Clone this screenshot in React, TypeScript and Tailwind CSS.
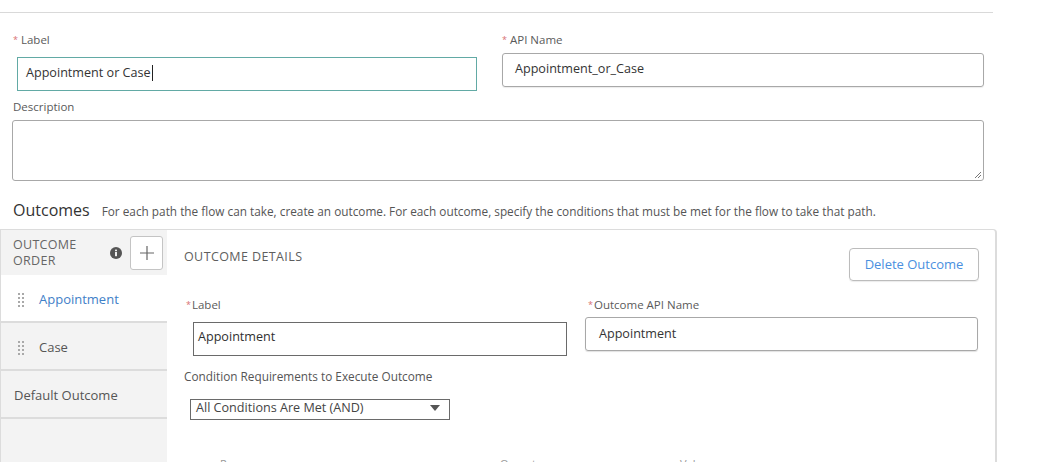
import type { ReactNode } from 'react'

const FONT = { fontFamily: '"Open Sans", "Noto Sans", Arial, sans-serif' }

function Req({ children, gap = true }: { children: ReactNode; gap?: boolean }) {
  return (
    <div className="flex h-[14px] items-center text-[11.5px] leading-[14px] text-[#5a5a5a]">
      <span className={`text-[9px] text-[#d76f72] ${gap ? 'mr-[3px]' : 'mr-[1px]'}`}>*</span>
      {children}
    </div>
  )
}

function DragDots() {
  return (
    <svg width="6" height="14" viewBox="0 0 6 14" className="shrink-0">
      {[0, 1, 2, 3].map((r) =>
        [0, 1].map((c) => (
          <rect key={`${r}-${c}`} x={c * 4} y={r * 4} width="2" height="2" fill="#a9a9a9" />
        )),
      )}
    </svg>
  )
}

function SideRow({
  label,
  active,
  handle,
}: {
  label: string
  active?: boolean
  handle?: boolean
}) {
  return (
    <div
      className={`flex h-[48px] items-center border-b-2 border-[#dcdcdc] pt-[3px] ${
        active ? 'bg-white' : 'bg-[#f3f3f3]'
      } ${handle ? 'pl-[17px]' : 'pl-[13px]'}`}
    >
      {handle && <DragDots />}
      <span
        className={`text-[13px] ${handle ? 'ml-[15px]' : ''} ${
          active ? 'text-[#3f80c8]' : 'text-[#555]'
        }`}
      >
        {label}
      </span>
    </div>
  )
}

export default function App() {
  return (
    <div className="relative h-[462px] w-[1055px] overflow-hidden bg-white" style={FONT}>
      {/* header rule */}
      <div className="h-[13px] w-[993px] border-b border-[#d9d9d9]" />

      {/* label / api name */}
      <div className="flex h-[78px] items-start">
        <div className="ml-[13px] mt-[20px] w-[464px]">
          <Req>Label</Req>
          <div className="ml-[4px] mt-[10px] flex h-[34px] w-[460px] items-center border border-[#62aaa5] pb-[2px] pl-[8px] text-[12.6px] text-[#333]">
            Appointment or Case
            <span className="ml-[1px] inline-block h-[16px] w-px bg-[#222]" />
          </div>
        </div>
        <div className="ml-[25px] mt-[20px] w-[482px]">
          <Req>API Name</Req>
          <div className="mt-[6px] flex h-[34px] w-[482px] items-center rounded-[3px] border border-[#a8a8a8] pb-[2px] pl-[12px] text-[12.6px] text-[#333] shadow-[0_1px_1px_rgba(0,0,0,0.08)]">
            Appointment_or_Case
          </div>
        </div>
      </div>

      {/* description */}
      <div className="ml-[13px] mt-[9px] h-[14px] text-[11.5px] leading-[14px] text-[#5a5a5a]">
        Description
      </div>
      <div className="relative ml-[12px] mt-[6px] h-[61px] w-[972px] rounded-[3px] border border-[#a8a8a8]">
        <svg width="9" height="9" viewBox="0 0 9 9" className="absolute bottom-[1px] right-[1px]">
          <path d="M8 2 L2 8 M8 5 L5 8" stroke="#777" strokeWidth="1" />
        </svg>
      </div>

      {/* outcomes heading */}
      <div className="ml-[13px] mt-[19px] flex h-[20px] items-baseline">
        <span className="text-[16px] leading-[20px] text-[#333]">Outcomes</span>
        <span className="ml-[12px] text-[11.8px] text-[#555]">
          For each path the flow can take, create an outcome. For each outcome, specify the
          conditions that must be met for the flow to take that path.
        </span>
      </div>

      {/* outcomes panel */}
      <div className="mt-[9px] flex h-[240px] w-[997px] rounded-tr-[4px] border-l border-r-2 border-t border-[#dcdcdc]">
        <div className="w-[166px] shrink-0 bg-[#f3f3f3]">
          <div className="flex h-[45px] items-center justify-between pl-[12px] pr-[4px]">
            <div className="text-[12.5px] uppercase leading-[16px] tracking-[0.3px] text-[#666]">
              Outcome
              <br />
              Order
            </div>
            <div className="flex items-center">
              <svg width="12" height="12" viewBox="0 0 12 12" className="mr-[8px]">
                <circle cx="6" cy="6" r="6" fill="#555" />
                <rect x="5.1" y="5" width="1.8" height="4.2" fill="#fff" />
                <rect x="5.1" y="2.6" width="1.8" height="1.6" fill="#fff" />
              </svg>
              <div className="flex h-[34px] w-[33px] items-center justify-center rounded-[3px] border border-[#c4c4c4] bg-white">
                <svg width="16" height="16" viewBox="0 0 16 16">
                  <path d="M8 1 V15 M1 8 H15" stroke="#666" strokeWidth="1.2" />
                </svg>
              </div>
            </div>
          </div>
          <SideRow label="Appointment" active handle />
          <SideRow label="Case" handle />
          <SideRow label="Default Outcome" />
        </div>

        <div className="flex-1 pl-[17px] pr-[16px] pt-[18px]">
          <div className="flex items-start justify-between">
            <div className="mt-[1px] h-[16px] text-[12.5px] uppercase leading-[16px] tracking-[0.4px] text-[#5e5e5e]">
              Outcome Details
            </div>
            <div className="flex h-[33px] w-[130px] items-center justify-center rounded-[4px] border border-[#bcbcbc] pt-[1px] text-[13px] text-[#4a90e0] shadow-[0_1px_1px_rgba(0,0,0,0.08)]">
              Delete Outcome
            </div>
          </div>

          <div className="mt-[17px] flex items-start">
            <div className="w-[401px]">
              <div className="ml-[2px]">
                <Req gap={false}>Label</Req>
              </div>
              <div className="ml-[9px] mt-[10px] flex h-[34px] w-[374px] items-center border border-[#6a6a6a] pb-[4px] pl-[4px] text-[12.6px] font-medium text-[#2f2f2f]">
                Appointment
              </div>
            </div>
            <div>
              <div className="ml-[3px]">
                <Req gap={false}>Outcome API Name</Req>
              </div>
              <div className="mt-[5px] flex h-[34px] w-[393px] items-center rounded-[3px] border border-[#a8a8a8] pl-[13px] text-[12.6px] text-[#333] shadow-[0_1px_1px_rgba(0,0,0,0.12)]">
                Appointment
              </div>
            </div>
          </div>

          <div className="mt-[13px] h-[14px] text-[11.8px] leading-[14px] text-[#555]">
            Condition Requirements to Execute Outcome
          </div>
          <div className="ml-[6px] mt-[16px] flex h-[21px] w-[260px] items-start justify-between border border-[#6a6a6a] pl-[5px] pr-[9px]">
            <span className="text-[12.6px] leading-[15px] text-[#444]">
              All Conditions Are Met (AND)
            </span>
            <svg width="10" height="6" viewBox="0 0 10 6" className="mt-[5px]">
              <path d="M0 0 H10 L5 6 Z" fill="#555" />
            </svg>
          </div>

          <div className="ml-[36px] mt-[37px] flex text-[11px] leading-[14px] text-[#999]">
            <span className="w-[280px]">Resource</span>
            <span className="w-[180px]">Operator</span>
            <span>Value</span>
          </div>
        </div>
      </div>
    </div>
  )
}
